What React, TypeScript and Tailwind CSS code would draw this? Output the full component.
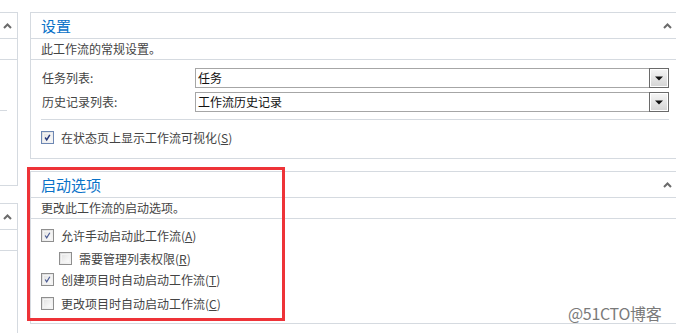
import React from "react";

const FONT = { fontFamily: '"Noto Sans CJK SC", "Liberation Sans", sans-serif' };

function Caret() {
  return (
    <svg width="9" height="6" viewBox="0 0 9 6">
      <polyline points="1,5 4.5,1.5 8,5" fill="none" stroke="#6b6b6b" strokeWidth="2" />
    </svg>
  );
}

function Check({ checked, focus, className = "" }: { checked?: boolean; focus?: boolean; className?: string }) {
  return (
    <div
      className={`w-[13px] h-[13px] shrink-0 border ${focus ? "border-[#6d87b3]" : "border-[#8e8e8e]"} bg-gradient-to-br from-[#dcdcdc] to-[#f7f7f7] p-[1px] ${className}`}
    >
      <div className="w-full h-full border border-[#f3f3f3] bg-gradient-to-br from-[#e4e4e4] to-[#fbfbfb] flex items-center justify-center">
        {checked && (
          <svg width="9" height="9" viewBox="0 0 9 9">
            <polyline
              points="1.5,4.5 3.5,7.5 7.5,1"
              fill="none"
              stroke={focus ? "#26387a" : "#4a5a92"}
              strokeWidth={focus ? 1.9 : 1.5}
            />
          </svg>
        )}
      </div>
    </div>
  );
}

function Select({ value }: { value: string }) {
  return (
    <div className="w-[474px] h-[20px] border border-[#a6a6a6] bg-white flex items-center">
      <div className="flex-1 pl-[2px] text-[12px] leading-none text-[#111]">{value}</div>
      <div className="w-[20px] h-[20px] -mr-[1px] border border-[#6a6a6a] p-[1px] bg-white">
        <div className="w-full h-full bg-gradient-to-b from-[#f4f4f4] to-[#d6d6d6] flex items-center justify-center">
          <svg width="8" height="5" viewBox="0 0 8 5">
            <polygon points="0,0.5 8,0.5 4,4.5" fill="#111" />
          </svg>
        </div>
      </div>
    </div>
  );
}

export default function App() {
  return (
    <div className="relative w-[676px] h-[333px] overflow-hidden bg-white flex text-[#444]" style={FONT}>
      {/* left sidebar */}
      <div className="w-[18px] shrink-0 flex flex-col">
        <div className="mt-[12px] h-[174px] border-t border-r border-b border-[#d5dae0] flex flex-col">
          <div className="h-[26px] border-b border-[#d5dae0] flex items-center pl-[3px]">
            <Caret />
          </div>
          <div className="h-[21px] border-b border-[#d5dae0]" />
          <div className="h-[50px]" />
          <div className="w-[7px] border-b border-[#d5dae0]" />
        </div>
        <div className="mt-[17px] flex-1 border-t border-r border-[#d5dae0] flex flex-col">
          <div className="h-[26px] border-b border-[#d5dae0] flex items-center pl-[3px]">
            <Caret />
          </div>
          <div className="h-[21px] border-b border-[#d5dae0]" />
        </div>
      </div>

      {/* main column */}
      <div className="ml-[12px] flex-1 flex flex-col pt-[12px]">
        {/* Panel 1 */}
        <div className="border-t border-l border-b border-[#d5dae0]">
          <div className="h-[26px] border-b border-[#d5dae0] flex items-center justify-between pl-[10px] pr-[4px]">
            <span className="text-[15px] leading-none text-[#0a72c8]">设置</span>
            <Caret />
          </div>
          <div className="h-[21px] border-b border-[#d5dae0] flex items-center pl-[10px] text-[12px] leading-none">
            此工作流的常规设置。
          </div>
          <div className="pl-[10px] pr-[7px] pt-[8px] pb-[14px]">
            <div className="flex items-center h-[20px]">
              <div className="w-[154px] pl-[1px] text-[12px] leading-none">任务列表:</div>
              <Select value="任务" />
            </div>
            <div className="flex items-center h-[20px] mt-[4px]">
              <div className="w-[154px] pl-[1px] text-[12px] leading-none">历史记录列表:</div>
              <Select value="工作流历史记录" />
            </div>
            <div className="mt-[7px] border-t border-[#d5dae0]" />
            <div className="mt-[11px] h-[13px] flex items-center">
              <Check checked focus />
              <span className="ml-[7px] text-[12px] leading-none">
                在状态页上显示工作流可视化(<u>S</u>)
              </span>
            </div>
          </div>
        </div>

        {/* Panel 2 */}
        <div className="mt-[12px] border-t border-l border-b border-[#d5dae0]">
          <div className="h-[26px] border-b border-[#d5dae0] flex items-center justify-between pl-[10px] pr-[4px]">
            <span className="text-[15px] leading-none text-[#0a72c8]">启动选项</span>
            <Caret />
          </div>
          <div className="h-[21px] border-b border-[#d5dae0] flex items-center pl-[10px] text-[12px] leading-none">
            更改此工作流的启动选项。
          </div>
          <div className="pl-[10px] pt-[10px] pb-[13px]">
            <div className="h-[13px] flex items-center">
              <Check checked />
              <span className="ml-[7px] text-[12px] leading-none">
                允许手动启动此工作流(<u>A</u>)
              </span>
            </div>
            <div className="mt-[10px] h-[13px] flex items-center pl-[18px]">
              <Check />
              <span className="ml-[7px] text-[12px] leading-none">
                需要管理列表权限(<u>R</u>)
              </span>
            </div>
            <div className="mt-[8px] h-[13px] flex items-center">
              <Check checked />
              <span className="ml-[7px] text-[12px] leading-none">
                创建项目时自动启动工作流(<u>T</u>)
              </span>
            </div>
            <div className="mt-[11px] h-[13px] flex items-center">
              <Check />
              <span className="ml-[7px] text-[12px] leading-none">
                更改项目时自动启动工作流(<u>C</u>)
              </span>
            </div>
          </div>
        </div>
      </div>

      {/* red annotation */}
      <div className="absolute left-[27px] top-[167px] w-[258px] h-[154px] border-[3px] border-[#ee3338]" />

      {/* watermark */}
      <div className="absolute left-[568px] top-[303px] text-[16px] leading-[20px] text-[#7a7a7a] tracking-[-0.3px]">
        @51CTO博客
      </div>
    </div>
  );
}
